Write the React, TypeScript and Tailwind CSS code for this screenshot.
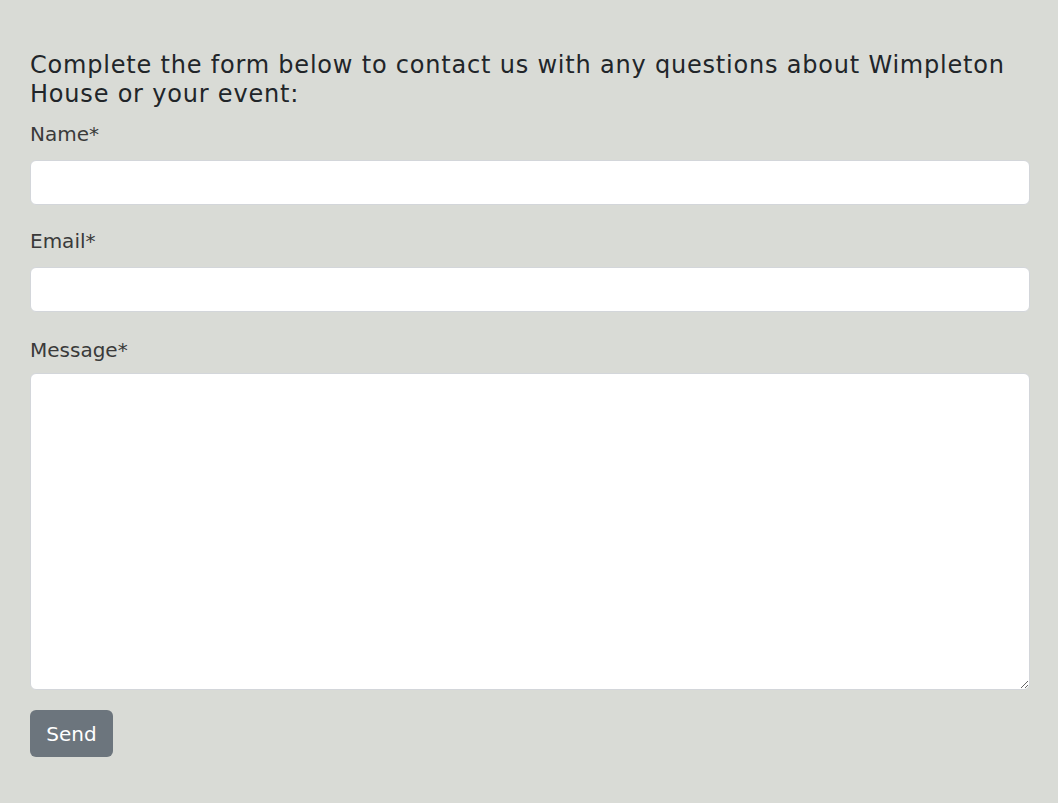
import React from "react";

export default function App() {
  return (
    <div
      className="min-h-screen w-full bg-[#d9dbd6] px-[30px] pt-[51px] pb-10"
      style={{ fontFamily: '"DejaVu Sans", "Open Sans", sans-serif' }}
    >
      <form className="w-[1000px]" onSubmit={(e) => e.preventDefault()}>
        <h2 className="text-[24px] leading-[29px] tracking-[0.8px] font-normal text-[#212529] mb-[10px]">
          Complete the form below to contact us with any questions about Wimpleton House or your event:
        </h2>

        <div className="mb-[21px]">
          <label htmlFor="name" className="block text-[20px] leading-[30px] text-[#3a3a3a] mb-[11px]">
            Name*
          </label>
          <input
            id="name"
            type="text"
            className="block w-full h-[45px] bg-white border border-[#d3d6da] rounded-[6px] px-3 text-[20px] outline-none"
          />
        </div>

        <div className="mb-[23px]">
          <label htmlFor="email" className="block text-[20px] leading-[30px] text-[#3a3a3a] mb-[11px]">
            Email*
          </label>
          <input
            id="email"
            type="email"
            className="block w-full h-[45px] bg-white border border-[#d3d6da] rounded-[6px] px-3 text-[20px] outline-none"
          />
        </div>

        <div className="mb-[20px]">
          <label htmlFor="message" className="block text-[20px] leading-[30px] text-[#3a3a3a] mb-[8px]">
            Message*
          </label>
          <textarea
            id="message"
            className="block w-full h-[317px] bg-white border border-[#d3d6da] rounded-[6px] px-3 py-2 text-[20px] outline-none"
          />
        </div>

        <button
          type="submit"
          className="h-[47px] w-[83px] rounded-[6px] bg-[#6c757d] text-white text-[20px] leading-[30px]"
        >
          Send
        </button>
      </form>
    </div>
  );
}
